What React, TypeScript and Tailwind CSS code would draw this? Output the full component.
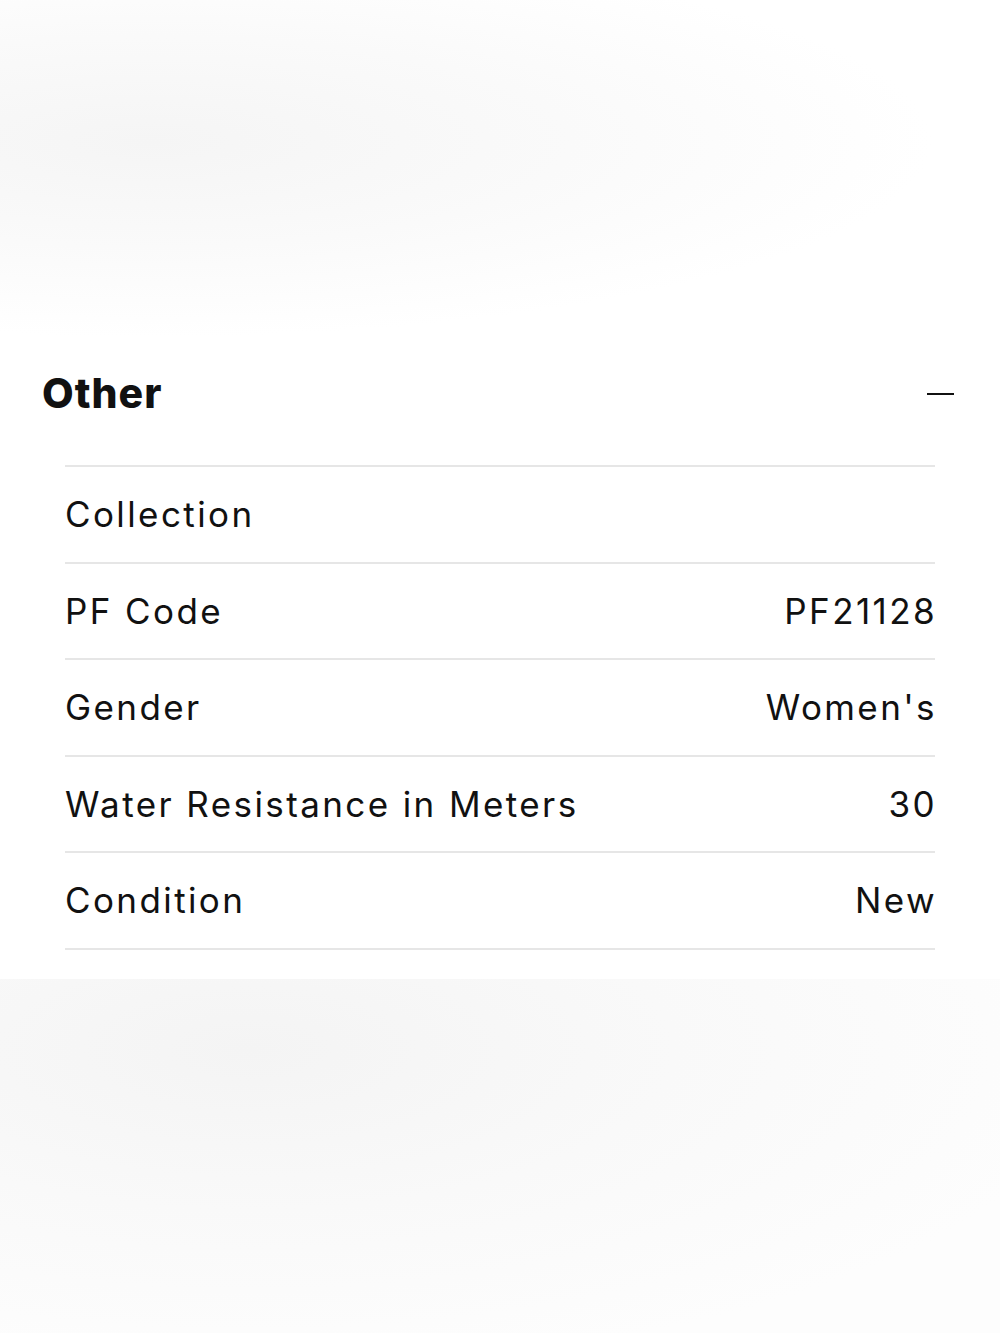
const rows = [
  { label: "Collection", value: "" },
  { label: "PF Code", value: "PF21128" },
  { label: "Gender", value: "Women's" },
  { label: "Water Resistance in Meters", value: "30" },
  { label: "Condition", value: "New" },
];

export default function App() {
  return (
    <div className="min-h-[1333px] w-[1000px] flex flex-col bg-white font-['Inter','Open_Sans',sans-serif] text-[#111]">
      {/* faded product image area */}
      <div className="h-[354px] bg-[radial-gradient(ellipse_at_15%_40%,#f5f5f5_0%,#fafafa_35%,#ffffff_65%)]" />

      <section className="bg-white pb-[29px]">
        <div className="flex items-center justify-between pl-[42px] pr-[46px] h-[80px]">
          <h2 className="text-[41px] font-extrabold tracking-[1px]">Other</h2>
          <span className="block w-[27px] h-[2px] bg-[#111]" />
        </div>
        <div className="mx-[65px] mt-[31px] border-t-2 border-[#e6e6e6]">
          {rows.map((r) => (
            <div
              key={r.label}
              className="flex items-center justify-between h-[96.5px] border-b-2 border-[#e6e6e6] text-[35px] tracking-[2.4px]"
            >
              <span>{r.label}</span>
              <span className="-mr-[2px]">{r.value}</span>
            </div>
          ))}
        </div>
      </section>

      <div className="flex-1 bg-[radial-gradient(ellipse_at_25%_20%,#f4f4f4_0%,#f9f9f9_40%,#fdfdfd_80%)]" />
    </div>
  );
}
